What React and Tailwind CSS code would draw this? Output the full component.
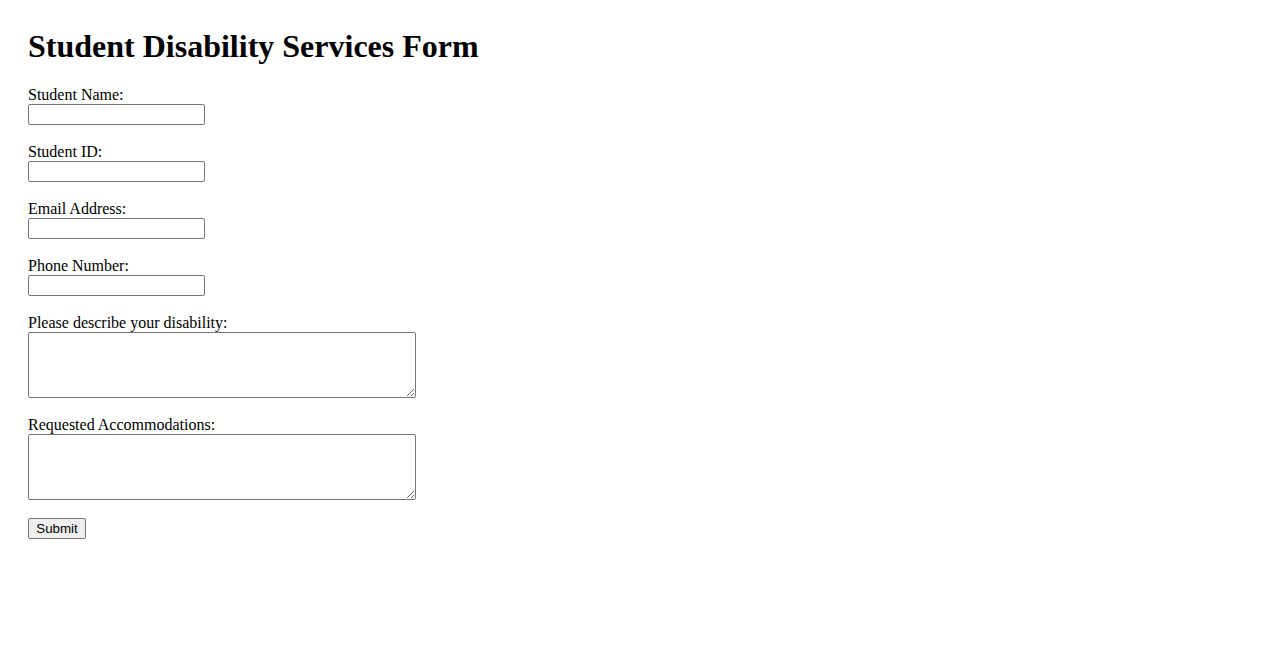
import React from 'react';

const fields = [
  { id: 'name', label: 'Student Name:' },
  { id: 'studentId', label: 'Student ID:' },
  { id: 'email', label: 'Email Address:' },
  { id: 'phone', label: 'Phone Number:' },
];

const areas = [
  { id: 'disability', label: 'Please describe your disability:' },
  { id: 'accommodations', label: 'Requested Accommodations:' },
];

const controlBorder = 'border border-[#767676] rounded-[2px] bg-white outline-none';

export default function App() {
  return (
    <div className="min-h-screen bg-white text-black font-['Liberation_Serif','Times_New_Roman',serif] text-[16px] pl-[28px] pt-[29px]">
      <h1 className="text-[32px] font-bold leading-[35px] mb-[22px]">Student Disability Services Form</h1>
      <form onSubmit={e => e.preventDefault()} className="flex flex-col items-start">
        {fields.map(f => (
          <div key={f.id} className="flex flex-col items-start mb-[18px]">
            <label htmlFor={f.id} className="leading-[18px]">{f.label}</label>
            <input id={f.id} type="text" className={`w-[177px] h-[21px] px-[2px] text-[13.33px] font-['Liberation_Sans',Arial,sans-serif] ${controlBorder}`} />
          </div>
        ))}
        {areas.map(a => (
          <div key={a.id} className="flex flex-col items-start mb-[18px]">
            <label htmlFor={a.id} className="leading-[18px]">{a.label}</label>
            <textarea id={a.id} className={`w-[388px] h-[66px] p-[2px] resize text-[13.33px] font-['Liberation_Mono',monospace] ${controlBorder}`} />
          </div>
        ))}
        <button type="submit" className="h-[21px] w-[58px] px-[6px] bg-[#efefef] border border-[#767676] rounded-[2px] text-[13.33px] leading-[15px] font-['Liberation_Sans',Arial,sans-serif] text-black">
          Submit
        </button>
      </form>
    </div>
  );
}
